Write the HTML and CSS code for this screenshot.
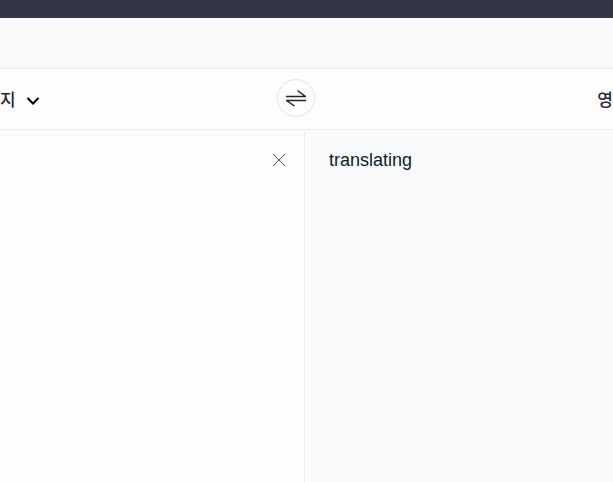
FILE: index.html
```html
<!DOCTYPE html>
<html lang="ko">
<head>
<meta charset="utf-8">
<meta name="viewport" content="width=device-width, initial-scale=1">
<link rel="stylesheet" href="styles.css">
</head>
<body>
<div class="topbar"></div>
<header class="header"></header>
<nav class="languages">
  <button class="language source" type="button">지
    <svg class="chevron" viewBox="0 0 14 10" aria-hidden="true"><path d="M1.500 2l5.500 5.500L12.500 2"/></svg>
  </button>
  <button class="swap" type="button">
    <svg viewBox="0 0 20 18" aria-hidden="true"><path d="M0 7.500h19.500L11.500 1.500M20 11.500H.500l8 5.500"/></svg>
  </button>
  <button class="language target" type="button">영</button>
</nav>
<main class="panes">
  <section class="pane input">
    <button class="clear" type="button">
      <svg viewBox="0 0 14 14" aria-hidden="true"><path d="M1 1l12 12M13 1L1 13"/></svg>
    </button>
  </section>
  <section class="pane output"><p class="result">translating</p></section>
</main>
</body>
</html>
```
FILE: styles.css
```css
* {
  box-sizing: border-box;
}

body {
  display: flex;
  flex-direction: column;
  min-height: 100vh;
  margin: 0;
  background: #f9fafc;
  color: #0e1a24;
  font-family: "Liberation Sans", "Noto Sans CJK KR", sans-serif;
  font-size: 18px;
}

button {
  padding: 0;
  border: 0;
  background: none;
  color: inherit;
  font: inherit;
}

svg {
  display: block;
  fill: none;
  stroke: currentColor;
}

.topbar {
  height: 18px;
  background: #343647;
}

.header {
  height: 50px;
}

.languages {
  display: grid;
  grid-template-columns: 277fr 38px 298fr;
  align-items: center;
  padding: 10px 0 12px;
  border-top: 1px solid #e9ebed;
  border-bottom: 1px solid #eceef0;
  background: #fdfdfd;
}

.language {
  display: flex;
  align-items: center;
  padding-top: 5px;
  color: #2f2438;
  font-size: 17px;
  font-weight: 500;
  line-height: 24px;
}

.source {
  gap: 10px;
}

.target {
  justify-self: end;
}

.chevron {
  width: 14px;
  height: 10px;
  color: #000;
  stroke-width: 2;
}

.swap {
  display: grid;
  place-items: center;
  width: 38px;
  height: 38px;
  border: 1px solid #e5e5e7;
  border-radius: 50%;
  color: #222;
}

.swap svg {
  width: 20px;
  height: 18px;
  stroke-width: 1.5;
}

.panes {
  display: grid;
  flex: 1;
  grid-template-columns: 305fr 308fr;
}

.pane {
  padding: 18px 24px;
}

.input {
  padding-right: 18px;
  border-right: 1px solid #eceef0;
  background: #fdfdfd;
}

.clear {
  display: grid;
  place-items: center;
  width: 14px;
  height: 24px;
  margin-left: auto;
  color: #555;
}

.clear svg {
  width: 14px;
  height: 14px;
}

.result {
  margin: 0;
  line-height: 24px;
}
```
